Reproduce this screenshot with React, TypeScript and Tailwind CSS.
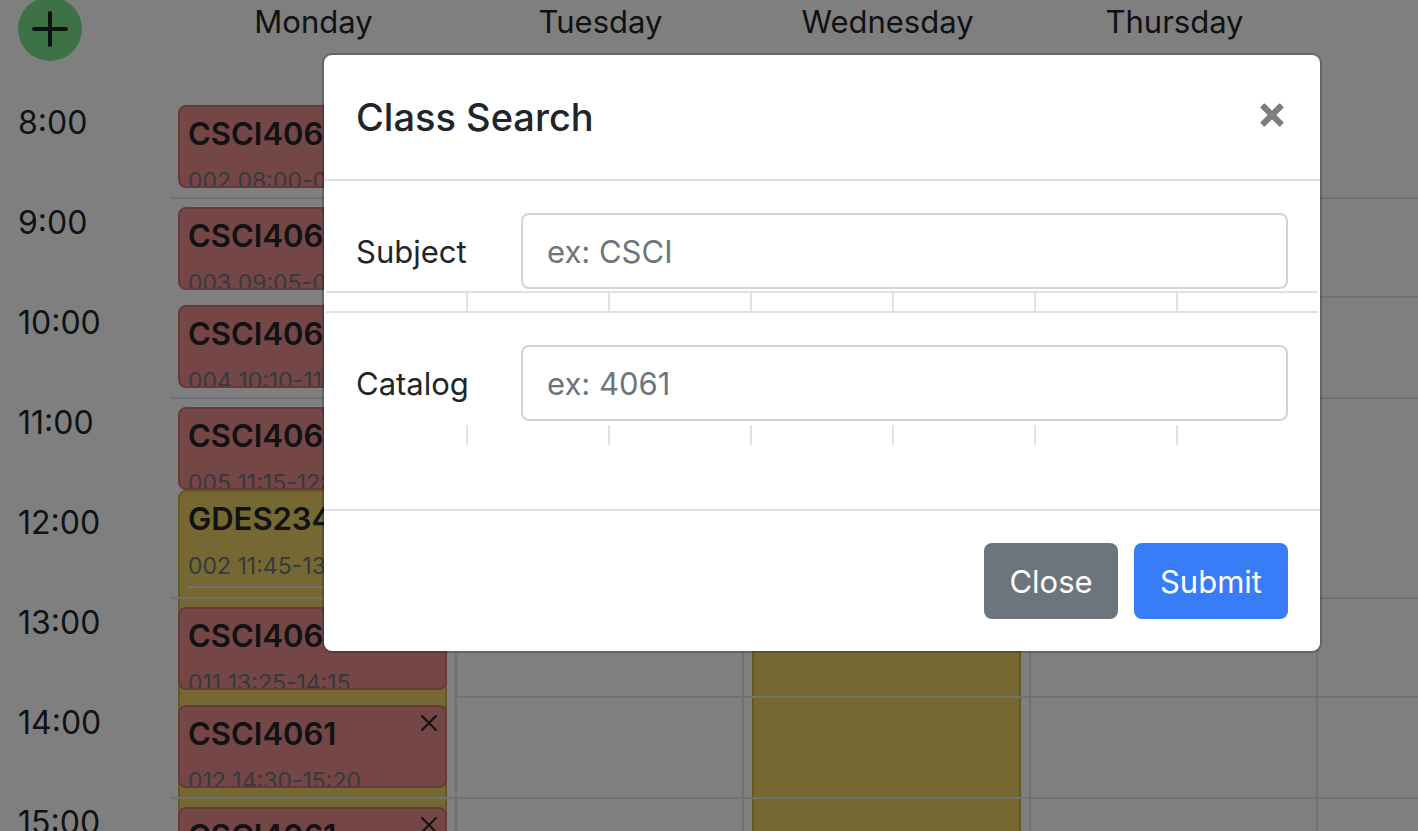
import { useState } from "react";

type Lesson = {
  code: string;
  meta: string;
  top: number;
  height: number;
  tone: "red" | "yellow";
  divided?: boolean;
};

const HOURS = ["8:00", "9:00", "10:00", "11:00", "12:00", "13:00", "14:00", "15:00"];

const red = (meta: string, top: number): Lesson => ({ code: "CSCI4061", meta, top, height: 83, tone: "red" });

const DAYS: { name: string; lessons: Lesson[] }[] = [
  {
    name: "Monday",
    lessons: [
      { code: "GDES2342", meta: "002 11:45-13:40", top: 392, height: 480, tone: "yellow", divided: true },
      red("002 08:00-08:50", 7),
      red("003 09:05-09:55", 109),
      red("004 10:10-11:00", 207),
      red("005 11:15-12:05", 309),
      red("011 13:25-14:15", 509),
      red("012 14:30-15:20", 607),
      red("013 15:35-16:25", 709),
    ],
  },
  { name: "Tuesday", lessons: [] },
  {
    name: "Wednesday",
    lessons: [{ code: "GDES2342", meta: "002 11:45-13:40", top: 392, height: 480, tone: "yellow", divided: true }],
  },
  { name: "Thursday", lessons: [] },
  { name: "Friday", lessons: [] },
];

function Cross() {
  return (
    <svg viewBox="0 0 16 16" className="size-4" fill="none" stroke="#212529" strokeWidth="2" strokeLinecap="round">
      <path d="M1 1 15 15M15 1 1 15" />
    </svg>
  );
}

function LessonCard({ lesson }: { lesson: Lesson }) {
  const tone =
    lesson.tone === "red" ? "z-20 bg-[#e88c8c] border-[#cc7474]" : "z-0 bg-[#ead064] border-[#c8b04c]";
  return (
    <article
      className={`absolute right-2.5 left-2 overflow-hidden rounded-lg border-2 px-2 ${tone}`}
      style={{ top: lesson.top, height: lesson.height }}
    >
      <div className="flex items-start justify-between">
        <h3 className="pt-1 text-[31px] leading-[46px] font-semibold">{lesson.code}</h3>
        <button type="button" aria-label={`Remove ${lesson.code}`} className="pt-2">
          <Cross />
        </button>
      </div>
      <p
        className={`pt-1.5 pb-0.5 text-[23px] leading-9 whitespace-nowrap text-[#6c757d] ${
          lesson.divided ? "border-b-2 border-[#dee2e6]" : ""
        }`}
      >
        {lesson.meta}
      </p>
    </article>
  );
}

function DayColumn({ lessons, first }: { lessons: Lesson[]; first: boolean }) {
  return (
    <div className="relative">
      {HOURS.map((hour, i) => (
        <div
          key={hour}
          className={`relative z-10 border-r-2 border-[#dee2e6] ${i % 2 ? "h-[99px]" : "h-[101px]"} ${
            i === 3 || (first && i % 2) ? "" : "border-b-2"
          }`}
        />
      ))}
      {lessons.map((lesson) => (
        <LessonCard key={lesson.top} lesson={lesson} />
      ))}
    </div>
  );
}

function Field({ id, label, placeholder }: { id: string; label: string; placeholder: string }) {
  const [value, setValue] = useState("");
  return (
    <div className="grid grid-cols-[165px_1fr] items-center px-8">
      <label htmlFor={id} className="pt-0.5 text-[31px] leading-[48px]">
        {label}
      </label>
      <input
        id={id}
        value={value}
        onChange={(e) => setValue(e.target.value)}
        placeholder={placeholder}
        className="h-[76px] w-full min-w-0 rounded-lg border-2 border-[#ced4da] px-6 text-[31px] text-[#495057] placeholder:text-[#6c757d] placeholder:opacity-100"
      />
    </div>
  );
}

function Ticks({ ruled = false }: { ruled?: boolean }) {
  return (
    <div
      aria-hidden="true"
      className={`mx-0.5 grid grid-cols-[repeat(6,142px)_1fr] border-[#dee2e6] ${
        ruled ? "mt-0.5 h-[22px] border-y-2" : "mt-1 h-5"
      }`}
    >
      {[0, 1, 2, 3, 4, 5].map((n) => (
        <span key={n} className="border-r-2 border-[#dee2e6]" />
      ))}
    </div>
  );
}

export default function App() {
  return (
    <div className="relative h-screen overflow-hidden bg-white font-['Inter','Liberation_Sans',sans-serif] text-[#212529]">
      <main className="h-full overflow-hidden">
        <div className="grid grid-cols-[170px_repeat(5,minmax(287px,1fr))]">
          <div className="h-[98px] pl-[18px]">
            <button
              type="button"
              aria-label="Add class"
              className="-mt-[3px] flex size-16 items-center justify-center rounded-full bg-[#78e48c]"
            >
              <svg viewBox="0 0 36 36" className="size-9" fill="none" stroke="#212529" strokeWidth="4" strokeLinecap="round">
                <path d="M18 2v32M2 18h32" />
              </svg>
            </button>
          </div>
          {DAYS.map((day) => (
            <h2 key={day.name} className="text-center text-[31px] leading-[44px]">
              {day.name}
            </h2>
          ))}
          <div className="pl-[18px] text-[32px]">
            {HOURS.map((hour) => (
              <div key={hour} className="h-[100px] leading-[50px]">
                {hour}
              </div>
            ))}
          </div>
          {DAYS.map((day, i) => (
            <DayColumn key={day.name} lessons={day.lessons} first={i === 0} />
          ))}
        </div>
      </main>

      <div className="absolute inset-0 z-30 flex items-start bg-black/50 pt-[53px] pr-24 pl-[322px]">
        <section
          role="dialog"
          aria-modal="true"
          aria-labelledby="search-title"
          className="w-full rounded-[10px] border-2 border-black/20 bg-white bg-clip-padding"
        >
          <header className="flex items-start justify-between border-b-2 border-[#dee2e6] p-8">
            <h1 id="search-title" className="text-[38px] leading-[60px] font-medium">
              Class Search
            </h1>
            <button type="button" aria-label="Close dialog" className="mt-4 mr-1">
              <svg viewBox="0 0 24 24" className="size-6" fill="none" stroke="#7f7f7f" strokeWidth="6" strokeLinejoin="round">
                <path d="M2.5 2.5 21.5 21.5M21.5 2.5 2.5 21.5" />
                <path
                  d="M1.3 4.2 4.2 1.3 12 9.1 19.8 1.3 22.7 4.2 14.9 12 22.7 19.8 19.8 22.7 12 14.9 4.2 22.7 1.3 19.8 9.1 12Z"
                  strokeWidth="1.6"
                />
              </svg>
            </button>
          </header>
          <form onSubmit={(e) => e.preventDefault()}>
            <div className="pt-8 pb-16">
              <Field id="subject" label="Subject" placeholder="ex: CSCI" />
              <Ticks ruled />
              <div className="pt-8">
                <Field id="catalog" label="Catalog" placeholder="ex: 4061" />
              </div>
              <Ticks />
            </div>
            <footer className="flex justify-end gap-4 border-t-2 border-[#dee2e6] p-8">
              <button type="button" className="h-[76px] w-[134px] rounded-lg bg-[#6c757d] pt-0.5 text-[31px] text-white">
                Close
              </button>
              <button type="submit" className="h-[76px] w-[154px] rounded-lg bg-[#387cf7] pt-0.5 text-[31px] text-white">
                Submit
              </button>
            </footer>
          </form>
        </section>
      </div>
    </div>
  );
}
